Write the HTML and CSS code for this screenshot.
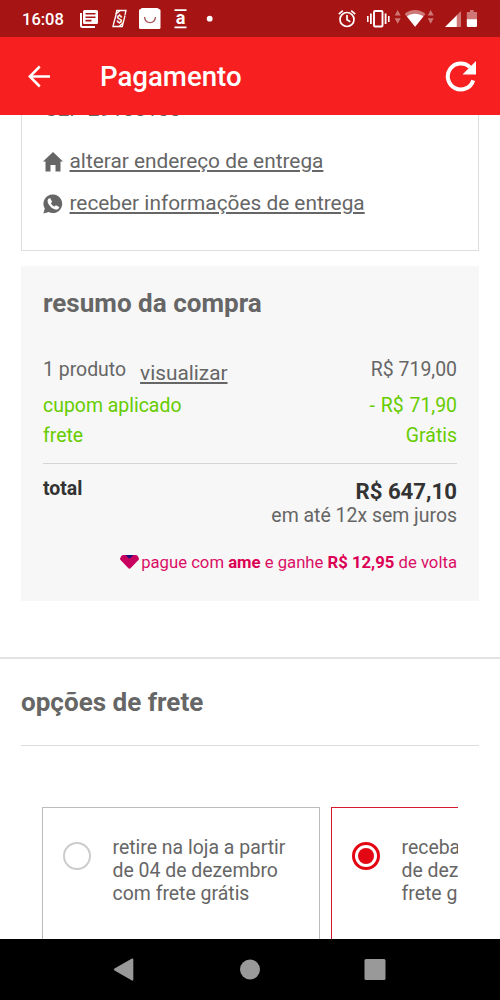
FILE: index.html
```
<!DOCTYPE html>
<html lang="pt-BR">
<head>
<meta charset="utf-8">
<title>Pagamento</title>
<link rel="stylesheet" href="styles.css">
</head>
<body>
<div class="screen">
  <div class="status">
    <span class="clock">16:08</span>
    <svg class="status-icons" width="430" height="37" viewBox="70 0 430 37" fill="#fff">
      <path d="M81 13v12.500q0 1.500 1.500 1.500H95" fill="none" stroke="#fff" stroke-width="2"/>
      <path fill-rule="evenodd" d="M84.500 10h12q1.500 0 1.500 1.500V22.500q0 1.500-1.500 1.500h-12q-1.500 0-1.500-1.500V11.500q0-1.500 1.500-1.500zM85.500 13v1.600h10V13zM85.500 16.400v1.600h10v-1.600zM85.500 19.800v1.600h6v-1.600z"/>
      <g fill="none" stroke="#fff" stroke-width="1.300"><path d="M116 14l.8-3.500h9.200l-1 4.500M123.500 21.500l-1.200 5h-9.300l1-4.500M116.200 14l-2.200 8.500M125 15.500l-1.700 7M115.500 14.500l4.500-4M123.500 22.500l-4.500 4"/></g>
      <text class="glyph-dollar" x="119.500" y="22.600" text-anchor="middle">$</text>
      <rect x="139" y="9" width="21.500" height="20" rx="1.500"/><rect x="141" y="8" width="17.500" height="3" rx="1"/>
      <path d="M144.500 17c1 7.500 10 7.500 11 0" fill="none" stroke="#a65555" stroke-width="1.400"/>
      <path d="M174.500 9.300h12v1.700h-12zM174.500 26.500h12v1.700h-12z"/>
      <text class="glyph-a" x="180.500" y="24" text-anchor="middle">a</text>
      <circle cx="209.700" cy="18.700" r="2.900"/>
      <g fill="none" stroke="#fff" stroke-width="1.700"><circle cx="347" cy="19.500" r="7"/><path d="M347 15v4.800l3.300 2M338.800 14.200l4-3.500M355.200 14.200l-4-3.500"/></g>
      <rect x="374" y="11" width="8.500" height="15.500" rx="1" fill="none" stroke="#fff" stroke-width="1.900"/>
      <path d="M370 13.500h1.800v10.500H370zM367 16h1.600v6H367zM384.700 13.500h1.800v10.500h-1.800zM388 16h1.600v6H388z"/>
      <g fill="#cf7777"><path d="M394.700 15.500l3-5.500 3 5.500zM394.700 18.300l3 5.500 3-5.500zM427.700 15.500l3-5.500 3 5.500zM427.700 18.300l3 5.500 3-5.500z"/></g>
      <path fill="#cf7777" d="M404.700 14c5.500-5.200 15-5.200 20.800 0L415.100 26.800z"/>
      <path d="M407 16.500c4-3.700 12-3.700 16.300 0l-8.200 10.300z"/>
      <path fill="#cf7777" d="M456.500 15.500l4.500-4.500v16h-4.500z"/><path d="M445 27l11.800-11.700V27z"/>
      <path fill="#cf7777" d="M466.800 12h3.200v-2h3.700v2h3.300v8h-10.200z"/><path d="M466.800 19.300H477v6.500q0 1.200-1.200 1.200H468q-1.200 0-1.200-1.200z"/>
    </svg>
  </div>
  <header class="appbar">
    <svg class="back" width="23" height="23" viewBox="0 0 23 23"><path d="M22 11.500H2.500M11.800 1.500l-10 10 10 10" fill="none" stroke="#fff" stroke-width="2.500"/></svg>
    <h1 class="title">Pagamento</h1>
    <svg class="reload" width="32" height="32" viewBox="0 0 32 32"><path d="M28.200 20.300A13 13 0 1 1 25 7.300" fill="none" stroke="#fff" stroke-width="4"/><path d="M31 1v13.500H17.500z" fill="#fff"/></svg>
  </header>
  <main class="content">
    <section class="address">
      <div class="cep">CEP 29100100</div>
      <a class="link"><svg width="20" height="20" viewBox="0 0 20 20"><path fill="#666" d="M10 0l10 9.500h-2.500V19.500h-5V13h-5v6.500h-5V9.500H0z"/></svg><span>alterar endereço de entrega</span></a>
      <a class="link"><svg width="20" height="20" viewBox="0 0 20 20"><path fill="#666" d="M10.200.5a9.300 9.300 0 1 1-4.500 17.600L.4 19.600l1.400-5A9.300 9.300 0 0 1 10.200.5z"/><path fill="#fff" d="M5.800 4.600l1.500-.4 1.800 3.500-1.200 1.500c.8 1.500 1.900 2.600 3.500 3.400l1.500-1.400 3.300 1.900c.2 1.700-1.500 2.700-3.200 2.500C8.800 15 5 11 4.600 7.300c-.1-1.100.4-2.100 1.200-2.700z"/></svg><span>receber informações de entrega</span></a>
    </section>
    <section class="summary">
      <h2 class="heading">resumo da compra</h2>
      <div class="row product"><span>1 produto</span><a class="view">visualizar</a><span class="amount">R$ 719,00</span></div>
      <div class="row green"><span>cupom aplicado</span><span class="amount minus">- R$ 71,90</span></div>
      <div class="row green"><span>frete</span><span class="amount">Grátis</span></div>
      <div class="totals">
        <strong class="total-label">total</strong>
        <div class="total-values"><strong class="total">R$ 647,10</strong><span class="installments">em até 12x sem juros</span></div>
      </div>
      <div class="ame"><svg width="19" height="14" viewBox="0 0 19 14"><path fill="#c8005f" d="M3.500 0h12Q17 0 17.700 1l1 2q.6 1.300-.5 2.300l-7.400 7.800q-1.300 1.200-2.600 0L.8 5.300Q-.3 4.300.3 3l1-2Q2 0 3.500 0z"/><path fill="#22107a" d="M5.500 0h8L9.500 3.800z"/></svg><span>pague com <b>ame</b> e ganhe <b>R$ 12,95</b> de volta</span></div>
    </section>
    <section class="shipping">
      <h2 class="heading">opções de frete</h2>
      <div class="options">
        <div class="option"><i class="radio"></i><p>retire na loja a partir<br>de 04 de dezembro<br>com frete grátis</p></div>
        <div class="option selected"><i class="radio"></i><p>receba<br>de dez<br>frete g</p></div>
      </div>
    </section>
  </main>
  <nav class="navbar">
    <svg width="500" height="61" viewBox="0 939 500 61" fill="#999"><path d="M132 958.500q1.300-.5 1.300 1v20q0 1.500-1.300 1l-17.500-10q-1.200-1 0-2z"/><circle cx="250" cy="969.500" r="10"/><rect x="364.500" y="959" width="21" height="21" rx="1.500"/></svg>
  </nav>
</div>
</body>
</html>
```
FILE: styles.css
```
* { box-sizing: border-box; }
body { margin: 0; font-family: Roboto, "Liberation Sans", sans-serif; color: #666; background: #fff; }
h1, h2, p { margin: 0; }
.screen { width: 500px; height: 1000px; display: flex; flex-direction: column; overflow: hidden; }
.status { height: 37px; flex: none; display: flex; background: #a61414; color: #fff; }
.clock { width: 70px; padding-left: 22px; font-size: 16.500px; line-height: 39px; font-weight: 500; white-space: nowrap; }
.status-icons { flex: none; }
.glyph-dollar { font-size: 11px; font-weight: 700; }
.glyph-a { font-size: 18px; font-weight: 700; }
.appbar { height: 78px; flex: none; display: flex; align-items: center; padding: 0 23px 0 28px; background: #f71f1f; color: #fff; }
.title { margin-left: 49px; font-size: 27.600px; font-weight: 500; line-height: 32px; padding-top: 2px; }
.reload { margin-left: auto; }
.content { display: flow-root; flex: 1; min-height: 0; overflow: hidden; }
.address { display: flow-root; margin: 0 21px; height: 136px; border: 1px solid #ddd; border-top: 0; padding: 0 21px; }
.cep { height: 24px; margin-top: -18px; margin-left: 1px; font-size: 20.800px; line-height: 24px; white-space: nowrap; }
.link { display: flex; align-items: center; gap: 6.500px; height: 42px; font-size: 20.830px; line-height: 24px; }
.cep + .link { margin-top: 19px; }
.link span, .view { text-decoration: underline; text-decoration-thickness: 1.500px; text-underline-offset: 2px; }
.link svg { margin-top: 2px; }
.summary { margin: 15px 21px 0; height: 335px; padding: 20px 22px 0; background: #f7f7f7; }
.heading { font-size: 26.050px; line-height: 34px; font-weight: 700; color: #666; }
.row { display: flex; height: 30px; font-size: 19.440px; line-height: 30px; }
.product { margin-top: 35px; height: 36px; }
.view { margin-left: 14px; font-size: 20.800px; line-height: 36px; }
.amount { margin-left: auto; }
.minus { word-spacing: 1px; }
.green { color: #66cc00; }
.totals { display: flex; justify-content: space-between; margin-top: 12px; padding-top: 13px; border-top: 1px solid #d5d5d5; }
.total-label { font-size: 19.440px; line-height: 24px; color: #333; }
.total-values { display: flex; flex-direction: column; align-items: flex-end; padding-top: 2px; }
.total { font-size: 22.200px; line-height: 24px; color: #333; }
.installments { font-size: 19.440px; line-height: 25px; }
.ame { display: flex; align-items: center; justify-content: flex-end; gap: 2.500px; margin-top: 23px; font-size: 16.700px; line-height: 24px; color: #da0f66; white-space: nowrap; }
.ame b { color: #dc0055; }
.ame svg { margin-bottom: 2px; }
.shipping { margin-top: 56px; border-top: 2px solid #e2e2e2; padding: 0 21px; }
.shipping .heading { height: 87px; line-height: 86px; border-bottom: 1px solid #ddd; }
.options { display: flex; gap: 11px; margin: 61px 21px 0; overflow: hidden; }
.option { width: 278px; height: 180px; flex: none; display: flex; padding: 29px 20px; border: 1px solid #bbb; }
.option p { margin-left: 21.500px; font-size: 19.440px; line-height: 22.800px; white-space: nowrap; }
.radio { width: 28px; height: 28px; flex: none; margin-top: 5px; border: 2px solid #ccc; border-radius: 50%; }
.option.selected { border-color: #d6192e; }
.selected .radio { border: 3px solid #e30613; padding: 3px; background: #e30613 content-box; }
.navbar { height: 61px; flex: none; background: #000; }
.navbar svg { display: block; }
```
